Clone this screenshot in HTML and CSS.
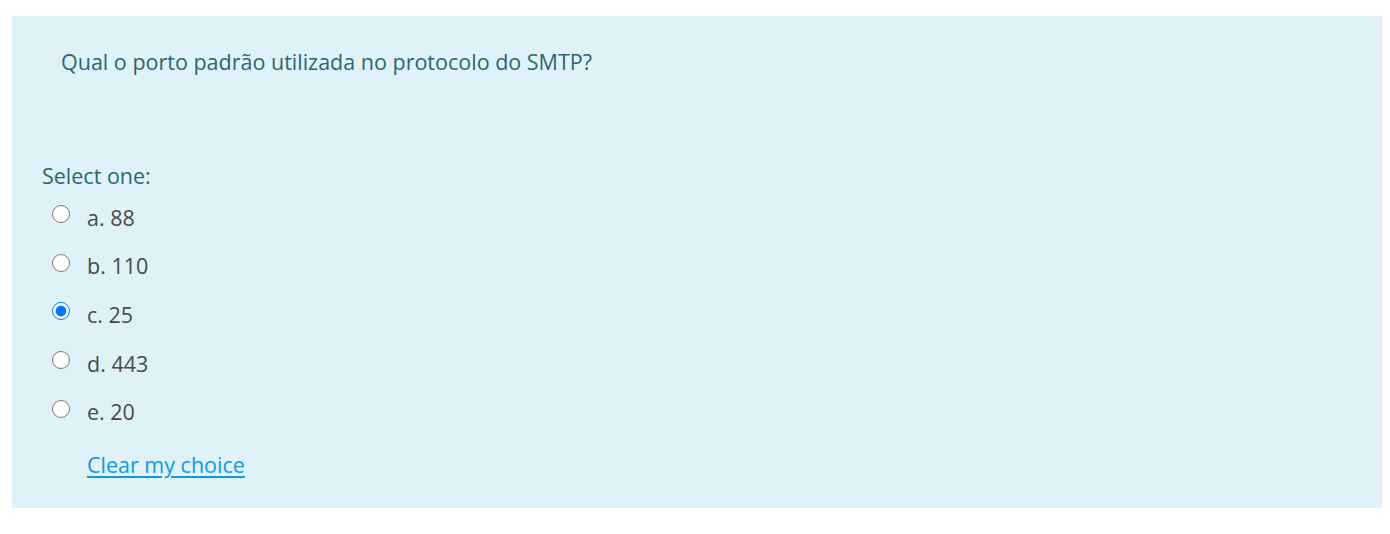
FILE: index.html
```html
<!DOCTYPE html>
<html lang="pt">
<head>
<meta charset="utf-8">
<title>Question</title>
<link rel="stylesheet" href="styles.css">
</head>
<body>
<div class="formulation">
  <div class="qtext">Qual o porto padrão utilizada no protocolo do SMTP?</div>
  <div class="ablock">
    <div class="prompt">Select one:</div>
    <div class="answer">
      <label class="opt"><input type="radio" name="q"><span>a. 88</span></label>
      <label class="opt"><input type="radio" name="q"><span>b. 110</span></label>
      <label class="opt"><input type="radio" name="q" checked><span>c. 25</span></label>
      <label class="opt"><input type="radio" name="q"><span>d. 443</span></label>
      <label class="opt"><input type="radio" name="q"><span>e. 20</span></label>
    </div>
    <a class="clear" href="#">Clear my choice</a>
  </div>
</div>
</body>
</html>
```
FILE: styles.css
```css
html, body {
  margin: 0;
  padding: 0;
  background: #ffffff;
}
body {
  padding: 16px 8px 26px 12px;
  font-family: "Open Sans", "Noto Sans", sans-serif;
}
.formulation {
  background: #def2f8;
  width: 1370px;
  height: 492px;
  box-sizing: border-box;
  padding: 31px 30px 0 30px;
  color: #2f6473;
  display: flex;
  flex-direction: column;
}
.qtext {
  font-size: 21.5px;
  line-height: 30px;
  padding-left: 19px;
}
.ablock {
  margin-top: 84px;
  display: flex;
  flex-direction: column;
}
.prompt {
  font-size: 21.5px;
  line-height: 30px;
}
.answer {
  display: flex;
  flex-direction: column;
  margin-top: 2px;
}
.opt {
  display: flex;
  align-items: center;
  height: 48.6px;
  color: #4a4a4a;
  font-size: 21.5px;
}
.opt input {
  width: 18px;
  height: 18px;
  margin: 0 0 6px 10px;
}
.opt span {
  margin-left: 17px;
}
.clear {
  margin-left: 45px;
  margin-top: 14px;
  color: #0f9ae0;
  font-size: 21.5px;
  line-height: 30px;
  text-decoration: underline;
  text-decoration-thickness: 2px;
  text-underline-offset: 3px;
  align-self: flex-start;
}
```
